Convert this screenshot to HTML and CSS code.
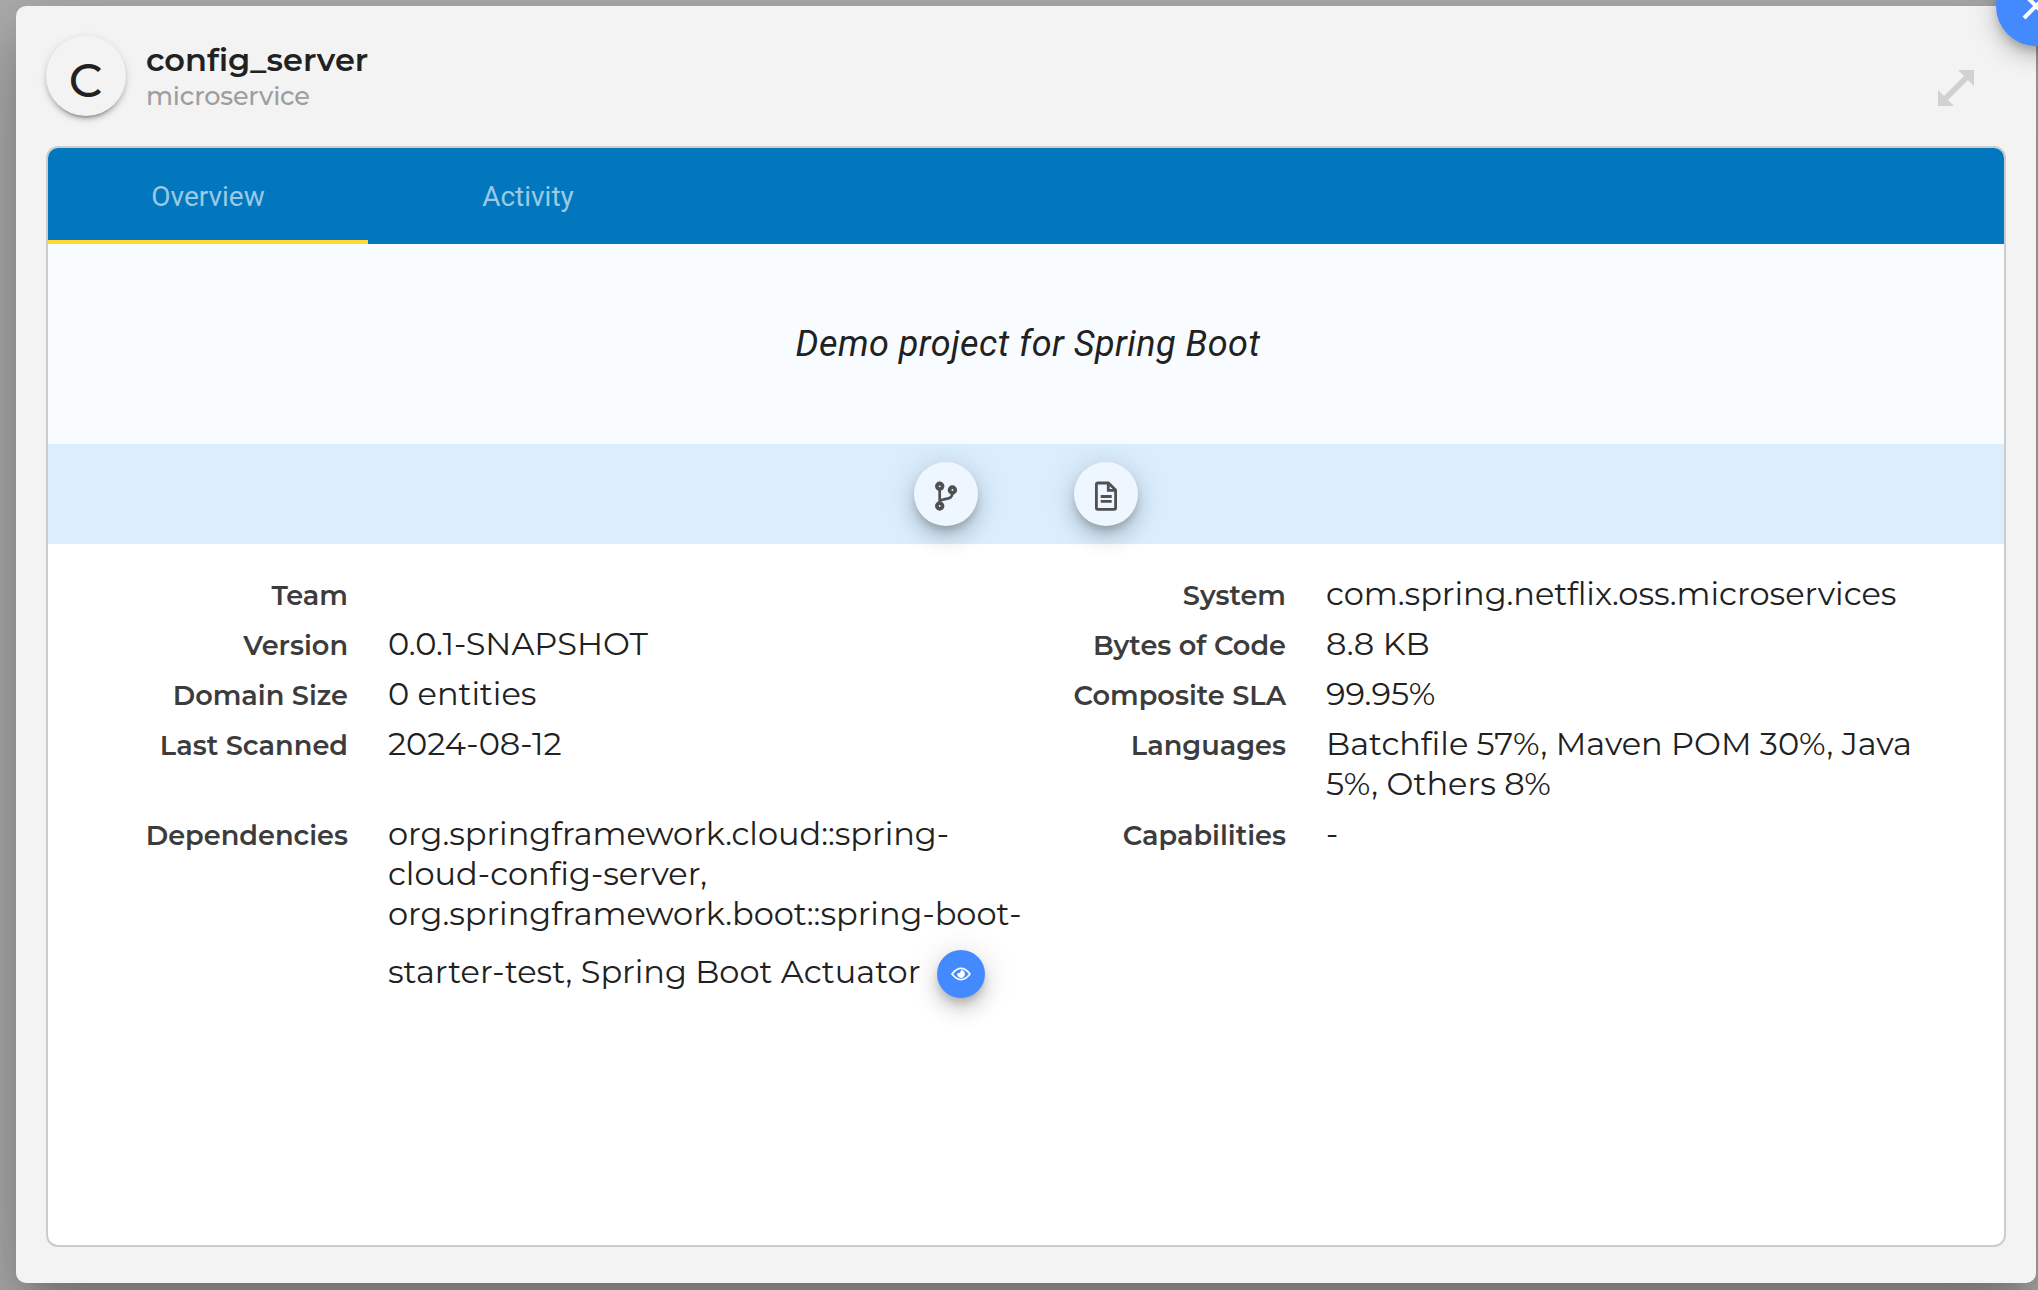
FILE: index.html
```
<!DOCTYPE html>
<html lang="en">
<head>
<meta charset="utf-8">
<title>config_server</title>
<link rel="stylesheet" href="styles.css">
</head>
<body>
<main class="dialog">
  <button class="close" aria-label="Close">
    <svg width="28" height="28" viewBox="0 0 28 28"><path d="M2 2L26 26M26 2L2 26" stroke="#fff" stroke-width="4"/></svg>
  </button>
  <header class="header">
    <div class="avatar">C</div>
    <div class="heading">
      <h1 class="title">config_server</h1>
      <p class="subtitle">microservice</p>
    </div>
    <svg class="expand" width="36" height="36" viewBox="0 0 36 36"><path d="M20 0H36V16L30 10L10 30L16 36H0V20L6 26L26 6Z" fill="#d1d1d1"/></svg>
  </header>
  <section class="card">
    <nav class="tabs">
      <a class="tab active">Overview</a>
      <a class="tab">Activity</a>
    </nav>
    <div class="description">Demo project for Spring Boot</div>
    <div class="actions">
      <button class="action" aria-label="Repository">
        <svg width="36" height="36" viewBox="0 0 36 36" fill="none" stroke="#505050"><g stroke-width="3.8"><circle cx="11.7" cy="10.3" r="2.8"/><circle cx="24.4" cy="14" r="2.8"/><circle cx="11.7" cy="30" r="2.8"/></g><path d="M11.7 13V27M24.4 17C24.4 24 18 21.5 11.7 24.8" stroke-width="2.7"/></svg>
      </button>
      <button class="action" aria-label="Documentation">
        <svg width="36" height="36" viewBox="0 0 36 36" fill="none" stroke="#505050" stroke-width="2.8"><path d="M10 7H20.5L27.6 14V32Q27.6 33.4 26.2 33.4H9.9Q8.4 33.4 8.4 32V8.5Q8.4 7 10 7Z" stroke-linejoin="round"/><path d="M20.3 7V14.4H27.6M12.7 20.5H23.7M12.7 25.4H23.7"/></svg>
      </button>
    </div>
    <div class="details">
      <dl class="facts">
        <dt>Team</dt><dd>&nbsp;</dd>
        <dt>Version</dt><dd>0.0.1-SNAPSHOT</dd>
        <dt>Domain Size</dt><dd>0 entities</dd>
        <dt>Last Scanned</dt><dd>2024-08-12</dd>
        <dt>Dependencies</dt>
        <dd>org.springframework.cloud::spring-<br>cloud-config-server,<br>org.springframework.boot::spring-boot-
          <div class="last-line"><span>starter-test, Spring Boot Actuator</span>
            <button class="view" aria-label="View all"><svg width="20" height="14" viewBox="0 0 20 14"><path d="M1 7Q10-4.2 19 7Q10 18.2 1 7Z" fill="none" stroke="#fff" stroke-width="1.7"/><path d="M10 3.1A3.9 3.9 0 1 1 6.2 6.2Q9.5 7 10 3.1Z" fill="#fff"/></svg></button>
          </div>
        </dd>
      </dl>
      <dl class="facts">
        <dt>System</dt><dd>com.spring.netflix.oss.microservices</dd>
        <dt>Bytes of Code</dt><dd>8.8 KB</dd>
        <dt>Composite SLA</dt><dd>99.95%</dd>
        <dt>Languages</dt><dd>Batchfile 57%, Maven POM 30%, Java<br>5%, Others 8%</dd>
        <dt>Capabilities</dt><dd>-</dd>
      </dl>
    </div>
  </section>
</main>
</body>
</html>
```
FILE: styles.css
```
* { box-sizing: border-box; }

body {
  margin: 0;
  width: 2038px;
  height: 1290px;
  padding: 6px 2px 7px 16px;
  overflow: hidden;
  background: #adadad;
  color: #212121;
  font-family: Montserrat, Inter, sans-serif;
}

h1, p, dl, dd { margin: 0; }

button {
  display: flex;
  align-items: center;
  justify-content: center;
  padding: 0;
  border: 0;
  border-radius: 50%;
}

.dialog {
  position: relative;
  height: 1277px;
  padding: 0 30px;
  border-radius: 10px;
  background: #f3f3f3;
  box-shadow: 0 22px 30px -14px rgba(0,0,0,.2), 0 48px 76px 6px rgba(0,0,0,.14), 0 18px 92px 16px rgba(0,0,0,.12);
}

.close {
  position: absolute;
  top: -40px;
  right: -40px;
  width: 80px;
  height: 80px;
  background: #448aff;
  box-shadow: 0 6px 10px -2px rgba(0,0,0,.2), 0 12px 20px rgba(0,0,0,.14), 0 2px 36px rgba(0,0,0,.12);
}

.header {
  display: flex;
  height: 140px;
  padding-top: 30px;
}

.avatar {
  width: 80px;
  height: 80px;
  margin-right: 20px;
  padding-right: 1px;
  border-radius: 50%;
  box-shadow: 0 6px 2px -4px rgba(0,0,0,.2), 0 4px 4px rgba(0,0,0,.14), 0 2px 10px rgba(0,0,0,.12);
  font-size: 47px;
  font-weight: 500;
  line-height: 90px;
  text-align: center;
}

.heading { flex: 1; }

.title {
  margin-top: 4px;
  font-size: 32px;
  font-weight: 600;
  line-height: 40px;
}

.subtitle {
  color: #9e9e9e;
  font-size: 25.6px;
  font-weight: 500;
  line-height: 32px;
  letter-spacing: -.2px;
}

.expand { margin: 34px 32px 0 0; }

.card {
  height: 1101px;
  border: 2px solid #ccc;
  border-radius: 12px;
  background: #fff;
  overflow: hidden;
}

.tabs {
  display: flex;
  height: 96px;
  background: #0277bd;
  font: 400 28px/98px Roboto, sans-serif;
}

.tab {
  width: 320px;
  height: 96px;
  color: #9ac9e5;
  text-align: center;
}

.tab.active { box-shadow: inset 0 -4px #fdd835; }

.description {
  height: 200px;
  padding-left: 4px;
  background: #f8fcff;
  font: italic 400 36px/200px Roboto, sans-serif;
  letter-spacing: .48px;
  text-align: center;
}

.actions {
  display: flex;
  align-items: center;
  justify-content: center;
  gap: 96px;
  height: 100px;
  background: #dbeefd;
}

.action {
  width: 64px;
  height: 64px;
  background: #eef6ff;
  box-shadow: 0 6px 10px -2px rgba(0,0,0,.2), 0 12px 20px rgba(0,0,0,.14), 0 2px 36px rgba(0,0,0,.12);
}

.details {
  display: grid;
  grid-template-columns: 938px 1fr;
  padding-top: 30px;
}

.facts {
  display: grid;
  grid-template-columns: 300px 1fr;
  grid-template-rows: 40px 40px 40px 80px auto;
  column-gap: 40px;
  row-gap: 10px;
  align-items: baseline;
  align-content: start;
}

dt {
  color: #3c3c3c;
  font-size: 27.2px;
  font-weight: 600;
  line-height: 40px;
  text-align: right;
}

dd {
  font-size: 32px;
  line-height: 40px;
  white-space: nowrap;
}

.last-line {
  display: flex;
  align-items: center;
  height: 48px;
  margin-top: 16px;
}

.last-line span { margin-top: -4px; }

.view {
  width: 48px;
  height: 48px;
  margin-left: 16px;
  background: #448aff;
  box-shadow: 0 6px 10px -2px rgba(0,0,0,.2), 0 12px 20px rgba(0,0,0,.14), 0 2px 36px rgba(0,0,0,.12);
}
```
